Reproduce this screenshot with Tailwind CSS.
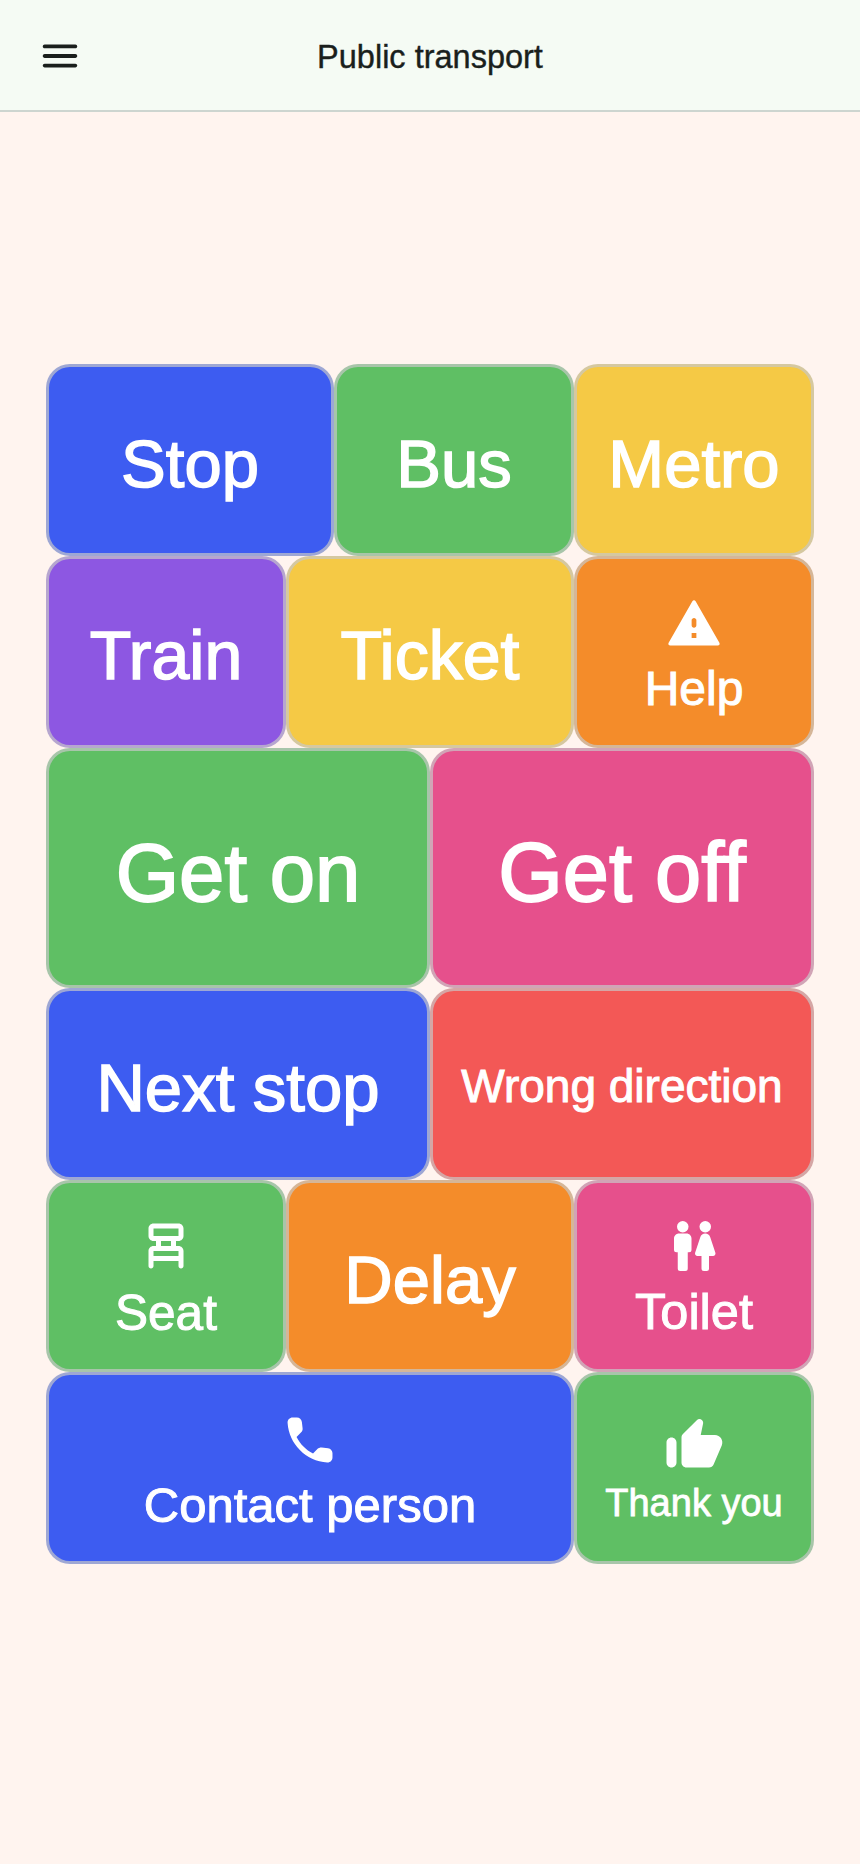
<!DOCTYPE html>
<html lang="en">
<head>
<meta charset="utf-8">
<title>Public transport</title>
<script src="https://cdn.jsdelivr.net/npm/@tailwindcss/browser@4"></script>
</head>
<body class="m-0 w-[860px] h-[1864px] overflow-hidden bg-[#fff4ef] font-['Liberation_Sans',Arial,sans-serif] text-white">
<header class="h-[112px] bg-[#f5fbf4] border-b-2 border-[#cdd5d0] flex items-center justify-center relative">
  <button class="absolute left-[37px] top-[33px] w-[46px] h-[46px] text-[#1a1f1c]" aria-label="Menu">
    <svg viewBox="0 0 24 24" class="w-[46px] h-[46px]" fill="currentColor"><path d="M4 18h16c.55 0 1-.45 1-1s-.45-1-1-1H4c-.55 0-1 .45-1 1s.45 1 1 1zm0-5h16c.55 0 1-.45 1-1s-.45-1-1-1H4c-.55 0-1 .45-1 1s.45 1 1 1zM3 7c0 .55.45 1 1 1h16c.55 0 1-.45 1-1s-.45-1-1-1H4c-.55 0-1 .45-1 1z"/></svg>
  </button>
  <h1 class="text-[32.5px] leading-[40px] font-normal text-[#1a1f1c] pt-[4px] [-webkit-text-stroke:0.4px_#1a1f1c]">Public transport</h1>
</header>
<main class="px-[46px] pt-[252px]">
  <div class="grid grid-cols-16 grid-rows-[192px_192px_240px_192px_192px_192px] w-[768px]">
    <button class="col-span-6 rounded-[24px] border-[3px] border-[#c8c8c8]/70 bg-[#3d5cf1] flex flex-col items-center justify-center pt-[8px] text-[67px] leading-[1.2] [-webkit-text-stroke:1.5px_white]">Stop</button>
    <button class="col-span-5 rounded-[24px] border-[3px] border-[#c8c8c8]/70 bg-[#5fbf64] flex flex-col items-center justify-center pt-[8px] text-[67px] leading-[1.2] [-webkit-text-stroke:1.5px_white]">Bus</button>
    <button class="col-span-5 rounded-[24px] border-[3px] border-[#c8c8c8]/70 bg-[#f5c945] flex flex-col items-center justify-center pt-[8px] text-[67px] leading-[1.2] [-webkit-text-stroke:1.5px_white]">Metro</button>

    <button class="col-span-5 rounded-[24px] border-[3px] border-[#c8c8c8]/70 bg-[#8d57e2] flex flex-col items-center justify-center pt-[8px] text-[68px] leading-[1.2] [-webkit-text-stroke:1.5px_white]">Train</button>
    <button class="col-span-6 rounded-[24px] border-[3px] border-[#c8c8c8]/70 bg-[#f5c945] flex flex-col items-center justify-center pt-[8px] text-[68px] leading-[1.2] [-webkit-text-stroke:1.5px_white]">Ticket</button>
    <button class="col-span-5 rounded-[24px] border-[3px] border-[#c8c8c8]/70 bg-[#f48c2a] flex flex-col items-center justify-center text-[48px] leading-[1.2] [-webkit-text-stroke:1px_white]">
      <svg viewBox="0 0 24 24" class="w-[60px] h-[60px]" fill="currentColor" stroke="none"><path fill-rule="evenodd" d="M2.5 21h19c.6 0 .95-.62.65-1.13L12.65 3.3a.75.75 0 0 0-1.3 0L1.85 19.87c-.3.51.05 1.13.65 1.13zM12 10c.5 0 .95.4.95.9v2c0 .55-.4 1-.95 1s-.95-.45-.95-1v-2c0-.5.45-.9.95-.9zm-.95 6h1.9v2h-1.9z"/></svg>
      <span class="mt-[7px] -mb-[7px]">Help</span>
    </button>

    <button class="col-span-8 rounded-[24px] border-[3px] border-[#c8c8c8]/70 bg-[#5fbf64] flex flex-col items-center justify-center pt-[10px] text-[81.5px] leading-[1.2] [-webkit-text-stroke:1.8px_white]">Get on</button>
    <button class="col-span-8 rounded-[24px] border-[3px] border-[#c8c8c8]/70 bg-[#e6508c] flex flex-col items-center justify-center pt-[10px] text-[83px] leading-[1.2] [-webkit-text-stroke:1.8px_white]">Get off</button>

    <button class="col-span-8 rounded-[24px] border-[3px] border-[#c8c8c8]/70 bg-[#3d5cf1] flex flex-col items-center justify-center pt-[8px] text-[67px] leading-[1.2] [-webkit-text-stroke:1.5px_white]">Next stop</button>
    <button class="col-span-8 rounded-[24px] border-[3px] border-[#c8c8c8]/70 bg-[#f35856] flex flex-col items-center justify-center pt-[6px] text-[46px] leading-[1.2] [-webkit-text-stroke:1px_white]">Wrong direction</button>

    <button class="col-span-5 rounded-[24px] border-[3px] border-[#c8c8c8]/70 bg-[#5fbf64] flex flex-col items-center justify-center text-[49.5px] leading-[1.2] [-webkit-text-stroke:1px_white]">
      <svg viewBox="0 0 24 24" class="w-[60px] h-[60px]" fill="currentColor" stroke="none"><path d="M17 10c1.1 0 2-.9 2-2V5c0-1.1-.9-2-2-2H7c-1.1 0-2 .9-2 2v3c0 1.1.9 2 2 2h1v2H7c-1.1 0-2 .9-2 2v6c0 .55.45 1 1 1s1-.45 1-1v-2h10v2c0 .55.45 1 1 1s1-.45 1-1v-6c0-1.1-.9-2-2-2h-1v-2h1zM7 8V5h10v3H7zm10 8H7v-2h10v2zm-3-4h-4v-2h4v2z"/></svg>
      <span class="mt-[7px] -mb-[7px]">Seat</span>
    </button>
    <button class="col-span-6 rounded-[24px] border-[3px] border-[#c8c8c8]/70 bg-[#f48c2a] flex flex-col items-center justify-center pt-[8px] text-[67px] leading-[1.2] [-webkit-text-stroke:1.5px_white]">Delay</button>
    <button class="col-span-5 rounded-[24px] border-[3px] border-[#c8c8c8]/70 bg-[#e6508c] flex flex-col items-center justify-center text-[50.5px] leading-[1.2] [-webkit-text-stroke:1px_white]">
      <svg viewBox="0 0 24 24" class="w-[60px] h-[60px]" fill="currentColor" stroke="none"><path d="M5.5 21v-6.5H5a1 1 0 0 1-1-1V9c0-1.1.9-2 2-2h3c1.1 0 2 .9 2 2v4.5a1 1 0 0 1-1 1h-.5V21a1 1 0 0 1-1 1h-2a1 1 0 0 1-1-1zM18 21v-5h1.6a1 1 0 0 0 .95-1.3L18.46 8.37C18.18 7.55 17.42 7 16.56 7h-.12c-.86 0-1.63.55-1.9 1.37L12.45 14.7a1 1 0 0 0 .95 1.3H15v5a1 1 0 0 0 1 1h1a1 1 0 0 0 1-1z"/><circle cx="7.5" cy="4.3" r="2.3"/><circle cx="16.5" cy="4.3" r="2.3"/></svg>
      <span class="mt-[6px] -mb-[6px]">Toilet</span>
    </button>

    <button class="col-span-11 rounded-[24px] border-[3px] border-[#c8c8c8]/70 bg-[#3d5cf1] flex flex-col items-center justify-center text-[49px] leading-[1.2] [-webkit-text-stroke:1px_white]">
      <svg viewBox="0 0 24 24" class="w-[60px] h-[60px] mt-[1px] -mb-[1px]" fill="currentColor" stroke="none"><path d="M19.23 15.26l-2.54-.29c-.61-.07-1.21.14-1.64.57l-1.84 1.84c-2.83-1.44-5.15-3.75-6.59-6.59l1.85-1.85c.43-.43.64-1.03.57-1.64l-.29-2.52c-.12-1.01-.97-1.77-1.99-1.77H5.03c-1.13 0-2.07.94-2 2.07.53 8.54 7.36 15.36 15.89 15.89 1.13.07 2.07-.87 2.07-2v-1.73c.01-1.01-.75-1.86-1.76-1.98z"/></svg>
      <span class="mt-[7px] -mb-[7px]">Contact person</span>
    </button>
    <button class="col-span-5 rounded-[24px] border-[3px] border-[#c8c8c8]/70 bg-[#5fbf64] flex flex-col items-center justify-center text-[38px] leading-[1.2] [-webkit-text-stroke:0.8px_white]">
      <svg viewBox="0 0 24 24" class="w-[60px] h-[60px]" fill="currentColor" stroke="none"><path d="M13.12 2.06 7.58 7.6c-.37.37-.58.88-.58 1.41V19c0 1.1.9 2 2 2h9c.8 0 1.52-.48 1.84-1.21l3.26-7.61C23.94 10.2 22.49 8 20.34 8h-5.65l.95-4.58c.1-.5-.05-1.01-.41-1.37-.59-.58-1.53-.58-2.11.01zM3 21c1.1 0 2-.9 2-2v-8c0-1.1-.9-2-2-2s-2 .9-2 2v8c0 1.1.9 2 2 2z"/></svg>
      <span class="mt-[6px] -mb-[6px]">Thank you</span>
    </button>
  </div>
</main>
</body>
</html>
